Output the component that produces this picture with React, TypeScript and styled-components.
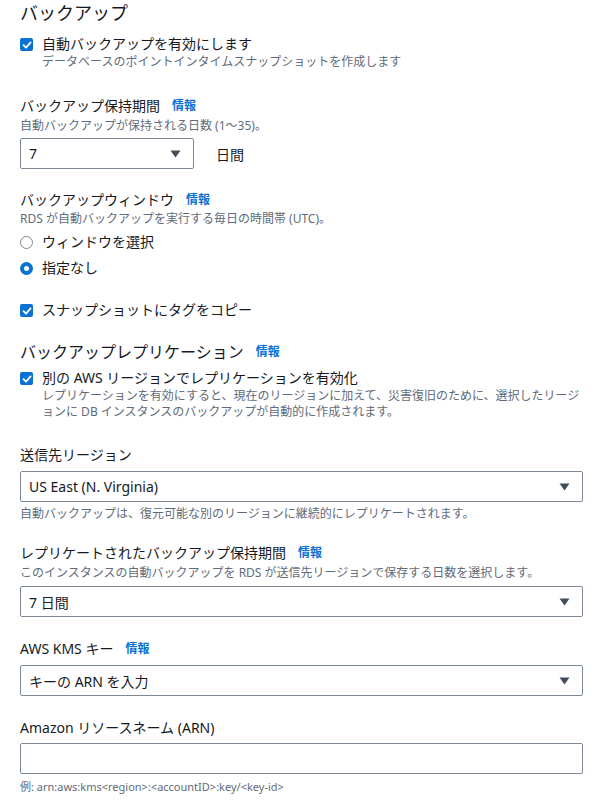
import styled, { createGlobalStyle } from 'styled-components';

const GlobalStyle = createGlobalStyle`
    body {
        margin: 0;
        background: #ffffff;
        color: #16191f;
        font-family: "Noto Sans", "Noto Sans CJK JP", sans-serif;
    }
`;

const Page = styled.div`
    padding: 1px 20px 10px 20px;
    width: 563px;
`;

const Title = styled.h2`
    margin: 0;
    font-size: 18px;
    font-weight: 400;
    line-height: 24px;
`;

const Heading = styled.h3<{ $mt?: number }>`
    margin: ${({ $mt }) => $mt ?? 0}px 0 0;
    font-size: 16px;
    font-weight: 400;
    line-height: 22px;
    display: flex;
    align-items: center;
`;

const Field = styled.div<{ $mt?: number }>`
    display: flex;
    flex-direction: column;
    margin-top: ${({ $mt }) => $mt ?? 0}px;
`;

const Label = styled.label`
    display: flex;
    align-items: center;
    font-size: 14px;
    line-height: 20px;
`;

const Info = styled.a`
    margin-left: 12px;
    font-size: 12px;
    font-weight: 700;
    color: #0972d3;
    text-decoration: none;
`;

const Desc = styled.div<{ $mt?: number }>`
    margin-top: ${({ $mt }) => $mt ?? 0}px;
    font-size: 12px;
    line-height: 16px;
    color: #5f6b7a;
`;

const Hint = styled(Desc)`
    font-size: 11px;
`;

const CheckRow = styled.div<{ $mt?: number }>`
    display: grid;
    grid-template-columns: 22px 1fr;
    margin-top: ${({ $mt }) => $mt ?? 0}px;
`;

const CheckBox = styled.span`
    width: 13px;
    height: 13px;
    margin-top: 4px;
    border-radius: 2px;
    background: #0972d3;
    display: flex;
    align-items: center;
    justify-content: center;
`;

const CheckText = styled.div`
    font-size: 14px;
    line-height: 20px;
`;

const RadioRow = styled.div<{ $mt?: number }>`
    display: flex;
    align-items: center;
    gap: 9px;
    margin-top: ${({ $mt }) => $mt ?? 0}px;
    font-size: 14px;
    line-height: 20px;
`;

const RadioDot = styled.span<{ $checked?: boolean }>`
    box-sizing: border-box;
    width: 13px;
    height: 13px;
    border-radius: 50%;
    border: ${({ $checked }) => ($checked ? '4px solid #0972d3' : '1.5px solid #7d8998')};
    background: #ffffff;
`;

const SelectRow = styled.div<{ $mt?: number }>`
    display: flex;
    align-items: center;
    gap: 22px;
    margin-top: ${({ $mt }) => $mt ?? 0}px;
`;

const SelectBox = styled.div<{ $width?: number; $mt?: number }>`
    box-sizing: border-box;
    width: ${({ $width }) => ($width ? `${$width}px` : '100%')};
    height: 31px;
    margin-top: ${({ $mt }) => $mt ?? 0}px;
    padding: 0 12px 0 8px;
    border: 1px solid #7d8998;
    border-radius: 2px;
    display: flex;
    align-items: center;
    justify-content: space-between;
    font-size: 14px;
    color: #16191f;
`;

const Unit = styled.span`
    font-size: 14px;
`;

const Check = () => (
    <svg width="10" height="10" viewBox="0 0 10 10">
        <path d="M1.5 5.2 L4 7.6 L8.6 2.4" stroke="#ffffff" strokeWidth="1.8" fill="none" strokeLinecap="round" strokeLinejoin="round" />
    </svg>
);

const Caret = () => (
    <svg width="11" height="8" viewBox="0 0 11 8">
        <path d="M0.5 0.5 H10.5 L5.5 7.5 Z" fill="#414d5c" />
    </svg>
);

const Select = ({ value, width, mt }: { value: string; width?: number; mt?: number }) => (
    <SelectBox $width={width} $mt={mt}>
        <span>{value}</span>
        <Caret />
    </SelectBox>
);

const App = () => {
    return (
        <>
            <GlobalStyle />
            <Page>
                <Title>バックアップ</Title>

                <CheckRow $mt={9}>
                    <CheckBox>
                        <Check />
                    </CheckBox>
                    <div>
                        <CheckText>自動バックアップを有効にします</CheckText>
                        <Desc>データベースのポイントインタイムスナップショットを作成します</Desc>
                    </div>
                </CheckRow>

                <Field $mt={26}>
                    <Label>
                        バックアップ保持期間<Info>情報</Info>
                    </Label>
                    <Desc $mt={2}>自動バックアップが保持される日数 (1〜35)。</Desc>
                    <SelectRow $mt={4}>
                        <Select value="7" width={174} />
                        <Unit>日間</Unit>
                    </SelectRow>
                </Field>

                <Field $mt={21}>
                    <Label>
                        バックアップウィンドウ<Info>情報</Info>
                    </Label>
                    <Desc $mt={1}>RDS が自動バックアップを実行する毎日の時間帯 (UTC)。</Desc>
                    <RadioRow $mt={5}>
                        <RadioDot />
                        ウィンドウを選択
                    </RadioRow>
                    <RadioRow $mt={6}>
                        <RadioDot $checked />
                        指定なし
                    </RadioRow>
                </Field>

                <CheckRow $mt={22}>
                    <CheckBox>
                        <Check />
                    </CheckBox>
                    <CheckText>スナップショットにタグをコピー</CheckText>
                </CheckRow>

                <Heading $mt={21}>
                    バックアップレプリケーション<Info>情報</Info>
                </Heading>

                <CheckRow $mt={5}>
                    <CheckBox>
                        <Check />
                    </CheckBox>
                    <div>
                        <CheckText>別の AWS リージョンでレプリケーションを有効化</CheckText>
                        <Desc>
                            レプリケーションを有効にすると、現在のリージョンに加えて、災害復旧のために、選択したリージョンに DB インスタンスのバックアップが自動的に作成されます。
                        </Desc>
                    </div>
                </CheckRow>

                <Field $mt={25}>
                    <Label>送信先リージョン</Label>
                    <Select value="US East (N. Virginia)" mt={6} />
                    <Desc $mt={4}>自動バックアップは、復元可能な別のリージョンに継続的にレプリケートされます。</Desc>
                </Field>

                <Field $mt={21}>
                    <Label>
                        レプリケートされたバックアップ保持期間<Info>情報</Info>
                    </Label>
                    <Desc $mt={2}>このインスタンスの自動バックアップを RDS が送信先リージョンで保存する日数を選択します。</Desc>
                    <Select value="7 日間" mt={5} />
                </Field>

                <Field $mt={22}>
                    <Label>
                        AWS KMS キー<Info>情報</Info>
                    </Label>
                    <Select value="キーの ARN を入力" mt={6} />
                </Field>

                <Field $mt={22}>
                    <Label>Amazon リソースネーム (ARN)</Label>
                    <SelectBox $mt={5} />
                    <Hint $mt={5}>例: arn:aws:kms&lt;region&gt;:&lt;accountID&gt;:key/&lt;key-id&gt;</Hint>
                </Field>
            </Page>
        </>
    );
};

export default App;
